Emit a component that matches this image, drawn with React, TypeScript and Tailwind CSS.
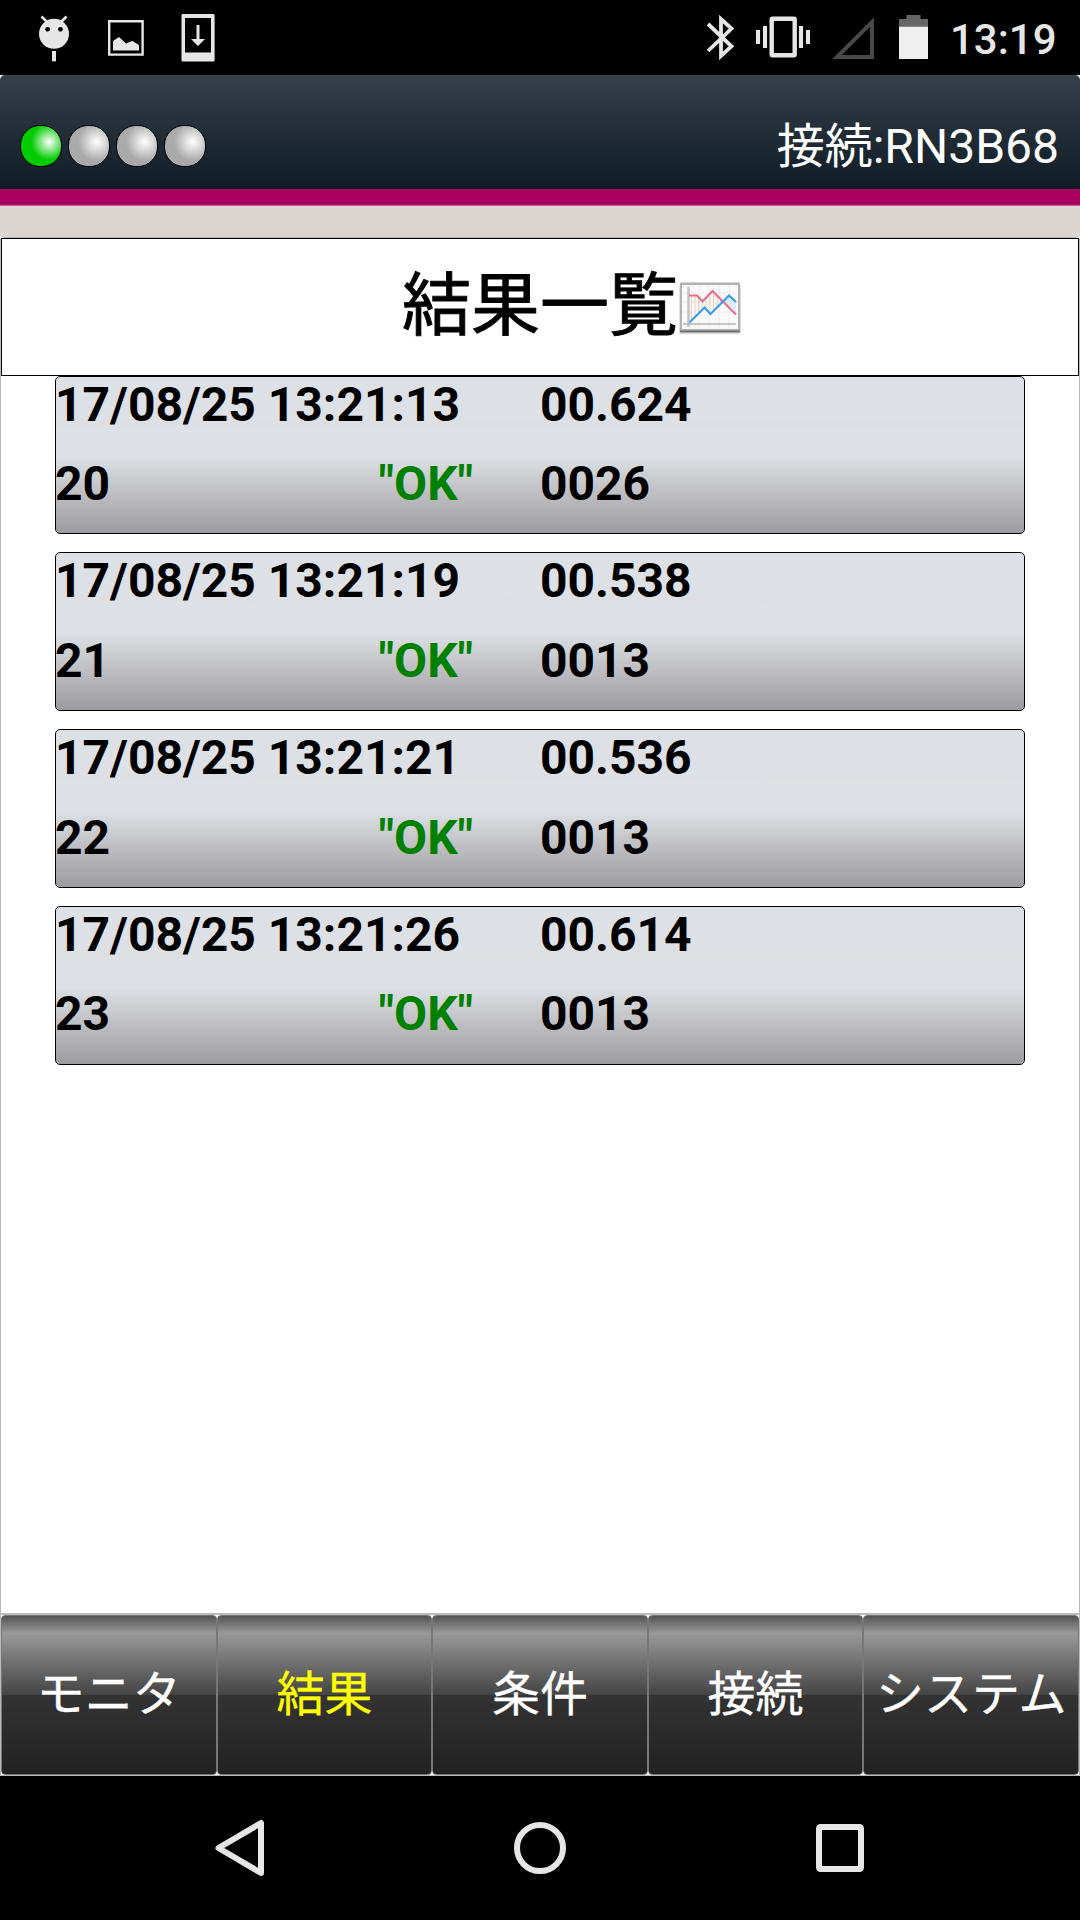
import React from 'react';

const rows = [
  { date: '17/08/25 13:21:13', time: '00.624', no: '20', count: '0026' },
  { date: '17/08/25 13:21:19', time: '00.538', no: '21', count: '0013' },
  { date: '17/08/25 13:21:21', time: '00.536', no: '22', count: '0013' },
  { date: '17/08/25 13:21:26', time: '00.614', no: '23', count: '0013' },
];

const tabs = ['モニタ', '結果', '条件', '接続', 'システム'];

function StatusBar() {
  return (
    <div className="flex h-[75px] items-start justify-between bg-black">
      <svg width="230" height="75" viewBox="0 0 230 75" fill="#e6e6e6">
        <circle cx="54" cy="33.8" r="15" />
        <path d="M41.500 16.500l5.500 5.500M66.500 16.500l-5.500 5.500" stroke="#e6e6e6" strokeWidth="2.6" />
        <circle cx="47.6" cy="29.3" r="2.4" fill="#000" />
        <circle cx="60.4" cy="29.3" r="2.4" fill="#000" />
        <rect x="52" y="51" width="4" height="10.3" />
        <path d="M109.2 21.2h33.4v33.4h-33.4z" fill="none" stroke="#e6e6e6" strokeWidth="2.4" />
        <path d="M113 50.5V41l6-4 7 6.500 6.500-2.500 6.500 4v5.500z" />
        <path fillRule="evenodd" d="M182.800 14h30.500q1.300 0 1.300 1.300v44.700q0 1.500-1.300 1.500h-30.500q-1.300 0-1.300-1.500V15.300q0-1.300 1.300-1.300zM185 18v34.600h26V18z" />
        <path d="M196.500 25h3v14h5.500l-7 7-7-7h5.500z" />
      </svg>
      <div className="flex">
        <svg width="260" height="75" viewBox="690 0 260 75" fill="none" stroke="#e6e6e6">
          <path d="M708 24l23.500 22.300L721 56V19l10.500 9.500L708 51" strokeWidth="3.800" />
          <rect x="771.700" y="18.700" width="23" height="36.600" rx="1" strokeWidth="4.400" />
          <path d="M758 30v14M765 26v22M801 26v22M808 30v14" strokeWidth="4.100" />
          <path d="M837 57L872 22v35z" stroke="#484848" strokeWidth="4" />
          <path d="M906.500 15h14v4h7.500v8h-29v-8h7.500z" fill="#666" stroke="none" />
          <path d="M899 26.700h29V59h-29z" fill="#efefef" stroke="none" />
        </svg>
        <span className="mr-[25.5px] w-[104.5px] whitespace-nowrap text-right font-[Roboto] text-[42px] font-medium leading-[79px] text-[#e6e6e6]">13:19</span>
      </div>
    </div>
  );
}

function Lamp({ on }: { on?: boolean }) {
  return (
    <div
      className={
        'size-[42px] rounded-[20px] border border-black ' +
        (on
          ? 'bg-[radial-gradient(circle_at_70%_40%,#ffffff_0px,#00cc00_18px)]'
          : 'bg-[radial-gradient(circle_at_70%_40%,#ffffff_0px,#aaaaaa_19px)]')
      }
    />
  );
}

function ChartIcon() {
  return (
    <svg className="mt-[3px] ml-[1px] mr-[2px]" width="63" height="53" viewBox="0 0 63 53" fill="none">
      <rect x="0" y="3" width="62" height="49.500" rx="2" fill="#000" opacity=".12" />
      <rect x="1" y="1" width="60" height="49.500" rx="1" fill="#6e6e6e" />
      <rect x="1" y="0.500" width="60" height="48" rx="1" fill="#b2b2b2" />
      <rect x="3" y="3" width="56" height="44" fill="#f9f9f9" />
      <path d="M20 4v42M30 4v42M40 4v42M50 4v42M4 11h54M4 20h54M4 30h54" stroke="#ececec" />
      <path d="M12.500 14v25M16 14v21M19.500 15v17M23 19v9M27 17v10M31 12v18M34.500 11v19M38 14v11M41.500 17v5" stroke="#f2cbb9" />
      <path d="M45 19l5-5 7 6v10z" fill="#dcebf8" />
      <path d="M9.500 5v40" stroke="#c2c2c2" strokeWidth="2.500" />
      <path d="M4 42h53" stroke="#b4b4b4" strokeWidth="1.300" />
      <path d="M10 13.500h8l5.500 6 10-10.500 23.500 23.500" stroke="#e5708f" strokeWidth="2.200" />
      <path d="M10.500 40.500l15-15 6 6.500 18.500-18.500 7 6.500" stroke="#399cec" strokeWidth="2.200" />
    </svg>
  );
}

export default function App() {
  return (
    <div className="flex h-[1920px] w-[1080px] flex-col overflow-hidden bg-white font-[Roboto,'Noto_Sans_CJK_JP',sans-serif] text-black">
      <StatusBar />
      <header className="flex h-[114px] justify-between rounded-t-[5px] bg-linear-to-b from-[#35404a] to-[#101c25] px-5">
        <div className="mt-[50px] flex gap-[6px]">
          <Lamp on />
          <Lamp />
          <Lamp />
          <Lamp />
        </div>
        <div className="mt-[36px] whitespace-nowrap pr-px text-[48px] leading-[72px] text-white">接続:RN3B68</div>
      </header>
      <div className="h-[17px] border-b border-[#cc5c99] bg-[#a9005f]" />
      <div className="h-[32px] rounded-b-[5px] border-b border-[#b5b2af] bg-[#dad5d0]" />
      <main className="flex h-[1538px] flex-col border-x border-[#bbb]">
        <h1 className="flex h-[138px] shrink-0 items-center justify-center border border-black pl-[66px]">
          <span className="whitespace-nowrap text-[69px] leading-[100px] [-webkit-text-stroke:0.9px_black]">結果一覧</span>
          <ChartIcon />
        </h1>
        <div className="-mt-[0.4px] ml-[54px] flex w-[970px] flex-1 flex-col gap-[18px]">
          {rows.map((r) => (
            <div
              key={r.no}
              className="grid h-[158.8px] grid-cols-[485px_1fr] grid-rows-[79.3px_79.3px] rounded-[5px] border border-black bg-[linear-gradient(#dde1e6_0%,#dde1e6_25%,#dedfe3_30%,#dde1e6_36%,#dde1e6_51%,#d0d4d7_60%,#c2c2c6_72%,#9c9ca0_100%)] text-[48px] font-bold leading-[55px]"
            >
              <span className="-ml-px whitespace-nowrap">{r.date}</span>
              <span className="-ml-px">{r.time}</span>
              <span className="-ml-px flex justify-between pr-[68px]">
                <span>{r.no}</span>
                <span className="text-[#008000]">"OK"</span>
              </span>
              <span className="-ml-px">{r.count}</span>
            </div>
          ))}
        </div>
        <nav className="grid h-[163px] shrink-0 grid-cols-5 border-t-2 border-b border-[#bbb] bg-white">
          {tabs.map((t) => (
            <div
              key={t}
              className={
                'flex items-center justify-center whitespace-nowrap rounded-[4px] border border-[#777] bg-[linear-gradient(#555_0%,#999_11%,#444_50%,#333_50.1%,#222_100%)] text-[48px] [-webkit-text-stroke:0.3px_currentColor] ' +
                (t === '結果' ? 'text-[#ffff00]' : 'text-white')
              }
            >
              {t}
            </div>
          ))}
        </nav>
      </main>
      <footer className="h-[144px] shrink-0 bg-black">
        <svg width="1080" height="144" viewBox="0 1776 1080 144" fill="none" stroke="#e6e6e6" strokeWidth="6">
          <path d="M218.500 1848L261 1823v50z" strokeLinejoin="round" />
          <circle cx="540" cy="1848" r="23" />
          <rect x="819" y="1827" width="42" height="42" rx="1.500" />
        </svg>
      </footer>
    </div>
  );
}
